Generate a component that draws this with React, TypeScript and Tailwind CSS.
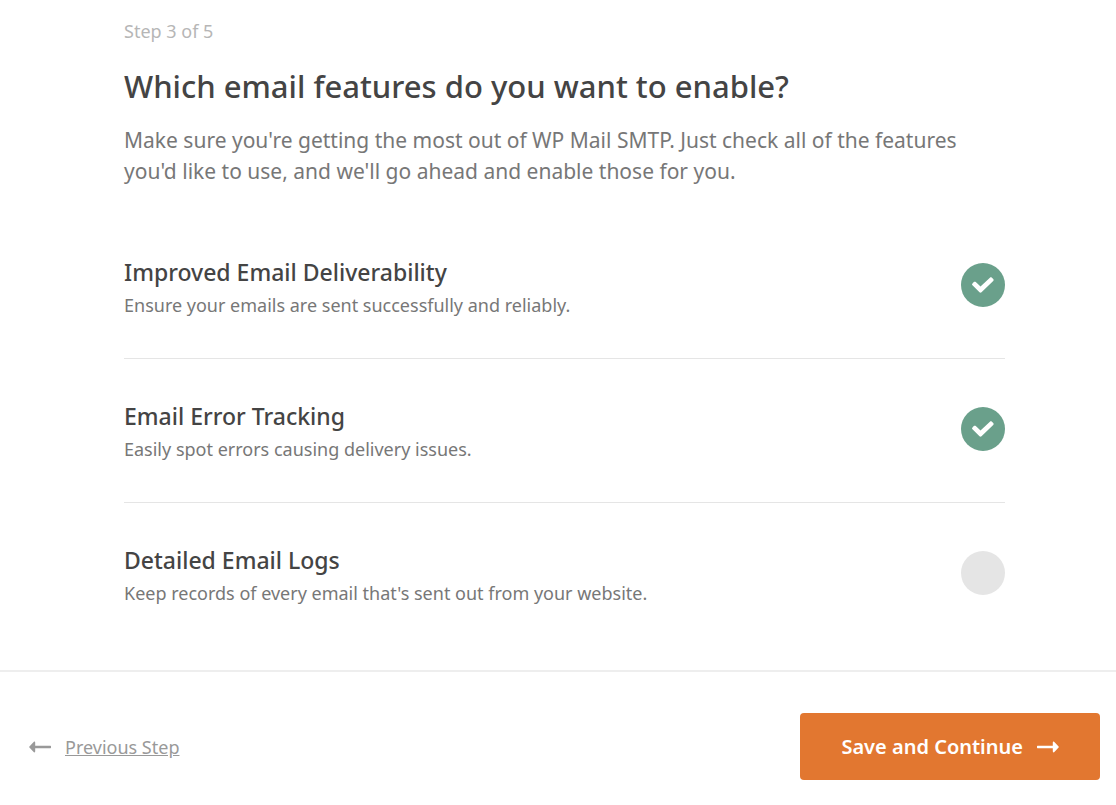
import { useState } from "react";

const initialFeatures = [
  {
    id: "deliverability",
    title: "Improved Email Deliverability",
    description: "Ensure your emails are sent successfully and reliably.",
    enabled: true,
  },
  {
    id: "error-tracking",
    title: "Email Error Tracking",
    description: "Easily spot errors causing delivery issues.",
    enabled: true,
  },
  {
    id: "email-logs",
    title: "Detailed Email Logs",
    description: "Keep records of every email that's sent out from your website.",
    enabled: false,
  },
];

const Arrow = ({ className }: { className?: string }) => (
  <svg className={className} width="22" height="12" viewBox="0 0 22 12" fill="currentColor" aria-hidden="true">
    <path d="M.5 4.7h15.3V1.4c0-.7.8-1 1.3-.6l4.5 4.6c.3.3.3.9 0 1.2l-4.5 4.6c-.5.4-1.3.1-1.3-.6V7.3H.5c-.3 0-.5-.2-.5-.5V5.2c0-.3.2-.5.5-.5z" />
  </svg>
);

const App = () => {
  const [features, setFeatures] = useState(initialFeatures);

  const toggle = (id: string) => {
    setFeatures(features.map((f) => (f.id === id ? { ...f, enabled: !f.enabled } : f)));
  };

  return (
    <form
      className="min-h-screen bg-white font-['Noto_Sans',sans-serif] text-[#777777]"
      onSubmit={(e) => e.preventDefault()}
    >
      <main className="pt-4 pr-[111px] pl-[124px]">
        <p className="text-[18px] leading-[30px] text-[#b6b6b6]">Step 3 of 5</p>
        <h1 className="mt-4 text-[31px] leading-12 font-medium text-[#444444]">
          Which email features do you want to enable?
        </h1>
        <p className="mt-[15px] max-w-[840px] text-[21px] leading-[31px]">
          Make sure you're getting the most out of WP Mail SMTP. Just check all of the features
          you'd like to use, and we'll go ahead and enable those for you.
        </p>

        <div className="mt-7 divide-y divide-[#e5e5e5]">
          {features.map((feature) => (
            <label
              key={feature.id}
              htmlFor={feature.id}
              className="flex cursor-pointer items-start justify-between pt-10 pb-[37px]"
            >
              <span>
                <span className="block text-[23px] leading-[34px] font-medium text-[#444444]">
                  {feature.title}
                </span>
                <span className="block text-[18px] leading-8">{feature.description}</span>
              </span>
              <span className="mt-2 grid size-11 shrink-0 place-items-center">
                <input
                  id={feature.id}
                  type="checkbox"
                  checked={feature.enabled}
                  onChange={() => toggle(feature.id)}
                  className="col-start-1 row-start-1 size-11 cursor-pointer appearance-none rounded-full bg-[#e5e5e5] checked:bg-[#6aa08b]"
                />
                {feature.enabled && (
                  <svg
                    className="pointer-events-none z-10 col-start-1 row-start-1"
                    width="24"
                    height="18"
                    viewBox="0 0 24 18"
                    fill="white"
                    aria-hidden="true"
                  >
                    <path d="M1.5 7.4l1.3-1.3c.6-.6 1.4-.6 2 0l4.7 4.4 9.4-8.8c.6-.6 1.4-.6 2 0l1.3 1.3c.6.6.6 1.3 0 1.9L10.5 16.3c-.6.6-1.4.6-2 0l-7-7c-.6-.6-.6-1.3 0-1.9z" />
                  </svg>
                )}
              </span>
            </label>
          ))}
        </div>
      </main>

      <footer className="mt-6 flex items-center justify-between border-t-2 border-[#eeeeee] pt-[41px] pr-4 pb-6 pl-[29px]">
        <a href="#previous" className="flex items-center gap-[14px] text-[#999999]">
          <Arrow className="rotate-180" />
          <span className="text-[18px] leading-[30px] underline">Previous Step</span>
        </a>
        <button
          type="submit"
          className="flex h-[67px] cursor-pointer items-center gap-[14px] rounded-[4px] bg-[#e27730] px-[41px] text-[20px] font-semibold text-white"
        >
          Save and Continue
          <Arrow />
        </button>
      </footer>
    </form>
  );
};

export default App;
